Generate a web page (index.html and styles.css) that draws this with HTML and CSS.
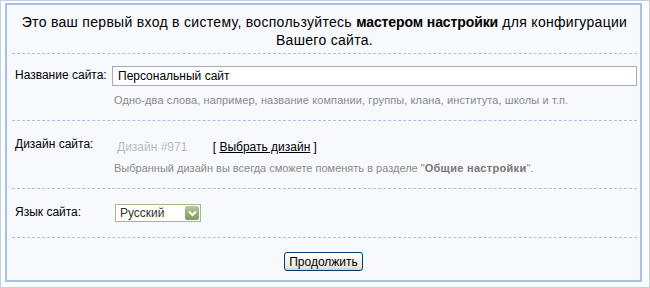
FILE: index.html
```html
<!DOCTYPE html>
<html lang="ru">
<head>
    <meta charset="UTF-8">
    <title>Мастер настройки</title>
    <link rel="stylesheet" href="styles.css">
</head>
<body>
    <div class="frame">
        <div class="panel">
            <div class="intro">
                Это ваш первый вход в систему, воспользуйтесь <b>мастером настройки</b> для конфигурации<br>Вашего сайта.
            </div>
            <div class="row row-name">
                <div class="label">Название сайта:</div>
                <div class="field">
                    <input class="text-input" type="text" value="Персональный сайт">
                    <div class="hint hint-wide">Одно-два слова, например, название компании, группы, клана, института, школы и т.п.</div>
                </div>
            </div>
            <div class="row row-design">
                <div class="label">Дизайн сайта:</div>
                <div class="field">
                    <div class="design-line">
                        <span class="design-name">Дизайн #971</span>
                        <span class="design-pick">[ <a href="#">Выбрать дизайн</a> ]</span>
                    </div>
                    <div class="hint">Выбранный дизайн вы всегда сможете поменять в разделе "<b>Общие настройки</b>".</div>
                </div>
            </div>
            <div class="row row-lang">
                <div class="label">Язык сайта:</div>
                <div class="field">
                    <div class="select">
                        <span class="select-value">Русский</span>
                        <span class="select-arrow">
                            <svg width="9" height="7" viewBox="0 0 9 7"><path d="M1 1.5 L4.5 5 L8 1.5" fill="none" stroke="#fff" stroke-width="2"/></svg>
                        </span>
                    </div>
                </div>
            </div>
            <div class="actions">
                <button class="btn">Продолжить</button>
            </div>
        </div>
    </div>
</body>
</html>
```

FILE: styles.css
```css
body {
    margin: 0;
    font-family: 'Liberation Sans', Arial, sans-serif;
    font-size: 12px;
    line-height: 14px;
    color: #000;
    background: #fff;
}
.frame {
    width: 650px;
    height: 288px;
    box-sizing: border-box;
    border: 1px solid #c3d0e4;
    padding: 2px 7px 5px 4px;
    background: #fcfdff;
}
.panel {
    height: 100%;
    box-sizing: border-box;
    border: 2px solid #a9bfe8;
    background: #f7f9fd;
}
.intro {
    text-align: center;
    font-size: 14px;
    line-height: 18px;
    letter-spacing: 0.3px;
    padding: 8px 0 4px;
    border-bottom: 1px dashed #a9c1ea;
    margin: 0 3px 0 5px;
}
.intro b {
    letter-spacing: -0.1px;
}
.row {
    display: flex;
    margin: 0 3px 0 5px;
    border-bottom: 1px dashed #a9c1ea;
}
.label {
    width: 97px;
    padding-left: 3px;
    flex-shrink: 0;
}
.field {
    flex-grow: 1;
}
.row-name {
    padding: 12px 0 13px;
}
.row-name .label {
    padding-top: 2px;
}
.text-input {
    display: block;
    width: 525px;
    height: 20px;
    box-sizing: border-box;
    border: 1px solid #a5acb2;
    background: #fff;
    font-family: inherit;
    font-size: 12px;
    padding: 1px 5px;
    color: #000;
    margin: 0;
}
.hint {
    font-size: 11px;
    color: #8a8a8a;
    padding-left: 2px;
    margin-top: 7px;
}
.hint-wide {
    letter-spacing: 0.1px;
}
.hint b {
    color: #777;
    letter-spacing: 0.3px;
}
.row-design {
    padding: 16px 0 13px;
}
.design-line {
    padding-top: 3px;
    padding-left: 5px;
}
.design-name {
    color: #bcbcbc;
    margin-right: 22px;
}
.design-pick a {
    color: #000;
}
.row-lang {
    padding: 15px 0 15px;
}
.row-lang .label {
    padding-top: 1px;
}
.select {
    display: flex;
    align-items: center;
    justify-content: space-between;
    width: 86px;
    height: 18px;
    box-sizing: border-box;
    margin-left: 3px;
    border: 1px solid #a5b98c;
    background: #fff;
    padding: 0 1px 0 4px;
}
.select-value {
    color: #333;
}
.select-arrow {
    width: 14px;
    height: 14px;
    display: flex;
    align-items: center;
    justify-content: center;
    background: linear-gradient(#b7c99d, #7e985f);
    border-radius: 2px;
}
.actions {
    text-align: center;
    padding-top: 14px;
}
.btn {
    font-family: inherit;
    font-size: 12px;
    height: 19px;
    padding: 0 4px;
    border: 1px solid #003c74;
    border-radius: 3px;
    background: linear-gradient(#ffffff, #ece9e0 80%, #d6d0c5);
    color: #000;
}
```
